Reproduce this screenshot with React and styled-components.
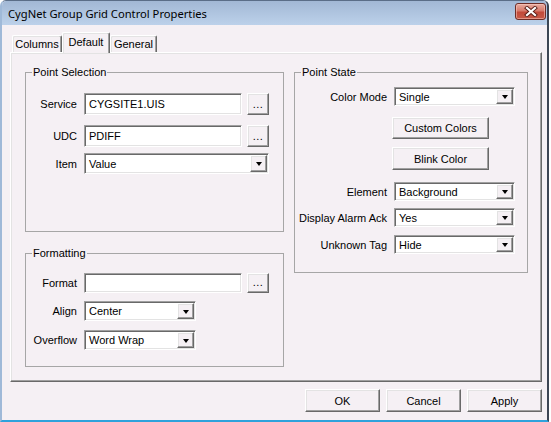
import React from 'react';
import styled, { createGlobalStyle } from 'styled-components';

const FACE = '#f5f0f4';

const Global = createGlobalStyle`
  html, body { margin: 0; padding: 0; background: #ffffff; }
  body { font-family: "Liberation Sans", Arial, sans-serif; font-size: 11px; color: #000; }
  * { box-sizing: border-box; }
`;

const Window = styled.div`
  width: 549px;
  height: 422px;
  display: flex;
  flex-direction: column;
  background: ${FACE};
  border-left: 2px solid #9fb9d8;
  border-right: 2px solid #3d4654;
  border-bottom: 2px solid #2fa2dc;
  border-top: 1px solid #5b6e88;
  border-radius: 6px 6px 0 0;
  overflow: hidden;
`;

const TitleBar = styled.div`
  height: 24px;
  flex: none;
  display: flex;
  align-items: center;
  justify-content: space-between;
  padding: 0 1px 0 6px;
  background: linear-gradient(#a2b8d5, #bcd1ea);
`;

const Title = styled.span`
  font-family: "Noto Sans", "Open Sans", sans-serif;
  font-size: 11.2px;
  color: #000;
  padding-top: 1px;
`;

const CloseBtn = styled.div`
  width: 31px;
  height: 17px;
  margin-top: -3px;
  border: 1px solid #6e2d27;
  border-radius: 3px;
  background: linear-gradient(#e7aca1 0%, #d77a6b 45%, #c24a3a 55%, #c75a48 100%);
  display: flex;
  align-items: center;
  justify-content: center;
  box-shadow: inset 0 0 0 1px rgba(255, 210, 200, 0.5);
`;

const Body = styled.div`
  flex: 1;
  display: flex;
  flex-direction: column;
  padding: 7px 5px 0 8px;
`;

const TabStrip = styled.div`
  display: flex;
  align-items: flex-end;
  height: 20px;
  padding-left: 2px;
  position: relative;
  z-index: 1;
`;

const Tab = styled.div`
  height: ${p => (p.$active ? 21 : 17)}px;
  width: ${p => p.$w}px;
  margin-bottom: ${p => (p.$active ? -1 : 0)}px;
  background: ${FACE};
  border-top: 1px solid #ffffff;
  border-left: 1px solid #ffffff;
  border-right: 1px solid #696969;
  box-shadow: inset -1px 0 0 #a0a0a0, inset 1px 1px 0 #e3e3e3;
  border-radius: 2px 2px 0 0;
  display: flex;
  align-items: ${p => (p.$active ? 'flex-start' : 'center')};
  padding-top: ${p => (p.$active ? 3 : 0)}px;
  justify-content: center;
  font-size: 11px;
`;

const Panel = styled.div`
  width: 532px;
  height: 330px;
  flex: none;
  border-top: 1px solid #ffffff;
  border-left: 1px solid #ffffff;
  border-right: 1px solid #696969;
  border-bottom: 1px solid #696969;
  box-shadow: inset -1px -1px 0 #a0a0a0, inset 1px 1px 0 #e3e3e3;
  display: grid;
  grid-template-columns: 259px 234px;
  column-gap: 10px;
  align-items: start;
  padding: 13px 0 0 14px;
`;

const Column = styled.div`
  display: flex;
  flex-direction: column;
  gap: 15px;
`;

const Group = styled.fieldset`
  margin: 0;
  padding: 0;
  min-width: 0;
  height: ${p => p.$h}px;
  border: 1px solid #a6a6a6;
`;

const Legend = styled.legend`
  margin-left: 6px;
  padding: 0 1px;
  font-size: 11px;
  line-height: 13px;
`;

const GroupBody = styled.div`
  display: flex;
  flex-direction: column;
  padding-top: ${p => p.$pt}px;
`;

const Row = styled.div`
  display: flex;
  align-items: center;
  height: ${p => p.$h}px;
  margin-top: ${p => p.$mt || 0}px;
`;

const Label = styled.div`
  width: ${p => p.$w}px;
  margin-right: 7px;
  text-align: right;
  white-space: nowrap;
  flex: none;
`;

const sunken = `
  border-top: 1px solid #a0a0a0;
  border-left: 1px solid #a0a0a0;
  border-right: 1px solid #ffffff;
  border-bottom: 1px solid #ffffff;
  box-shadow: inset 1px 1px 0 #696969, inset -1px -1px 0 #e3e3e3;
`;

const raised = `
  background: ${FACE};
  border-top: 1px solid #ffffff;
  border-left: 1px solid #ffffff;
  border-right: 1px solid #696969;
  border-bottom: 1px solid #696969;
  box-shadow: inset -1px -1px 0 #a0a0a0, inset 1px 1px 0 #e3e3e3;
`;

const TextField = styled.div`
  ${sunken}
  background: #ffffff;
  width: ${p => p.$w}px;
  height: 100%;
  display: flex;
  align-items: center;
  padding-left: 4px;
  white-space: nowrap;
`;

const DotsButton = styled.div`
  ${raised}
  width: 22px;
  height: 100%;
  margin-left: 5px;
  display: flex;
  align-items: flex-end;
  justify-content: center;
  padding-bottom: 4px;
  font-size: 11px;
  line-height: 11px;
  letter-spacing: 0.5px;
`;

const Combo = styled.div`
  ${sunken}
  background: #ffffff;
  width: ${p => p.$w}px;
  height: 100%;
  display: flex;
  align-items: stretch;
  padding: 1px;
`;

const ComboText = styled.div`
  flex: 1;
  display: flex;
  align-items: center;
  padding-left: 3px;
  white-space: nowrap;
`;

const DropBtn = styled.div`
  ${raised}
  width: 17px;
  flex: none;
  display: flex;
  align-items: center;
  justify-content: center;
`;

const Arrow = styled.div`
  width: 0;
  height: 0;
  border-left: 3.5px solid transparent;
  border-right: 3.5px solid transparent;
  border-top: 4px solid #000;
  margin-top: 1px;
`;

const PushButton = styled.div`
  ${raised}
  width: ${p => p.$w}px;
  height: ${p => p.$h}px;
  margin-left: ${p => p.$ml || 0}px;
  margin-top: ${p => p.$mt || 0}px;
  display: flex;
  align-items: center;
  justify-content: center;
  font-size: 11px;
  flex: none;
`;

const Footer = styled.div`
  display: flex;
  justify-content: flex-end;
  gap: 6px;
  padding-top: 7px;
  width: 532px;
`;

const Field = ({ label, lw, value, w, h, mt, dots }) => (
  <Row $h={h} $mt={mt}>
    <Label $w={lw}>{label}</Label>
    <TextField $w={w}>{value}</TextField>
    {dots && <DotsButton>...</DotsButton>}
  </Row>
);

const Select = ({ label, lw, value, w, h, mt }) => (
  <Row $h={h} $mt={mt}>
    <Label $w={lw}>{label}</Label>
    <Combo $w={w}>
      <ComboText>{value}</ComboText>
      <DropBtn><Arrow /></DropBtn>
    </Combo>
  </Row>
);

const CloseIcon = () => (
  <svg width="14" height="11" viewBox="0 0 14 11">
    <path d="M3 2 L11 9 M11 2 L3 9" stroke="#5a1e18" strokeWidth="4" strokeLinecap="square" />
    <path d="M3 2 L11 9 M11 2 L3 9" stroke="#ffffff" strokeWidth="2.2" strokeLinecap="square" />
  </svg>
);

export default function App() {
  return (
    <>
      <Global />
      <Window>
        <TitleBar>
          <Title>CygNet Group Grid Control Properties</Title>
          <CloseBtn><CloseIcon /></CloseBtn>
        </TitleBar>
        <Body>
          <TabStrip>
            <Tab $w={50}>Columns</Tab>
            <Tab $w={48} $active>Default</Tab>
            <Tab $w={47}>General</Tab>
          </TabStrip>
          <Panel>
            <Column>
              <Group $h={166}>
                <Legend>Point Selection</Legend>
                <GroupBody $pt={14}>
                  <Field label="Service" lw={51} value="CYGSITE1.UIS" w={158} h={22} dots />
                  <Field label="UDC" lw={51} value="PDIFF" w={158} h={22} mt={10} dots />
                  <Select label="Item" lw={51} value="Value" w={185} h={21} mt={6} />
                </GroupBody>
              </Group>
              <Group $h={120}>
                <Legend>Formatting</Legend>
                <GroupBody $pt={13}>
                  <Field label="Format" lw={51} value="" w={158} h={20} dots />
                  <Select label="Align" lw={51} value="Center" w={112} h={20} mt={8} />
                  <Select label="Overflow" lw={51} value="Word Wrap" w={112} h={20} mt={9} />
                </GroupBody>
              </Group>
            </Column>
            <Column>
              <Group $h={207}>
                <Legend>Point State</Legend>
                <GroupBody $pt={8}>
                  <Select label="Color Mode" lw={92} value="Single" w={121} h={19} />
                  <PushButton $w={97} $h={22} $mt={11} $ml={97}>Custom Colors</PushButton>
                  <PushButton $w={97} $h={23} $mt={8} $ml={97}>Blink Color</PushButton>
                  <Select label="Element" lw={92} value="Background" w={121} h={19} mt={12} />
                  <Select label="Display Alarm Ack" lw={92} value="Yes" w={121} h={19} mt={7} />
                  <Select label="Unknown Tag" lw={92} value="Hide" w={121} h={19} mt={8} />
                </GroupBody>
              </Group>
            </Column>
          </Panel>
          <Footer>
            <PushButton $w={75} $h={23}>OK</PushButton>
            <PushButton $w={75} $h={23}>Cancel</PushButton>
            <PushButton $w={75} $h={23}>Apply</PushButton>
          </Footer>
        </Body>
      </Window>
    </>
  );
}
